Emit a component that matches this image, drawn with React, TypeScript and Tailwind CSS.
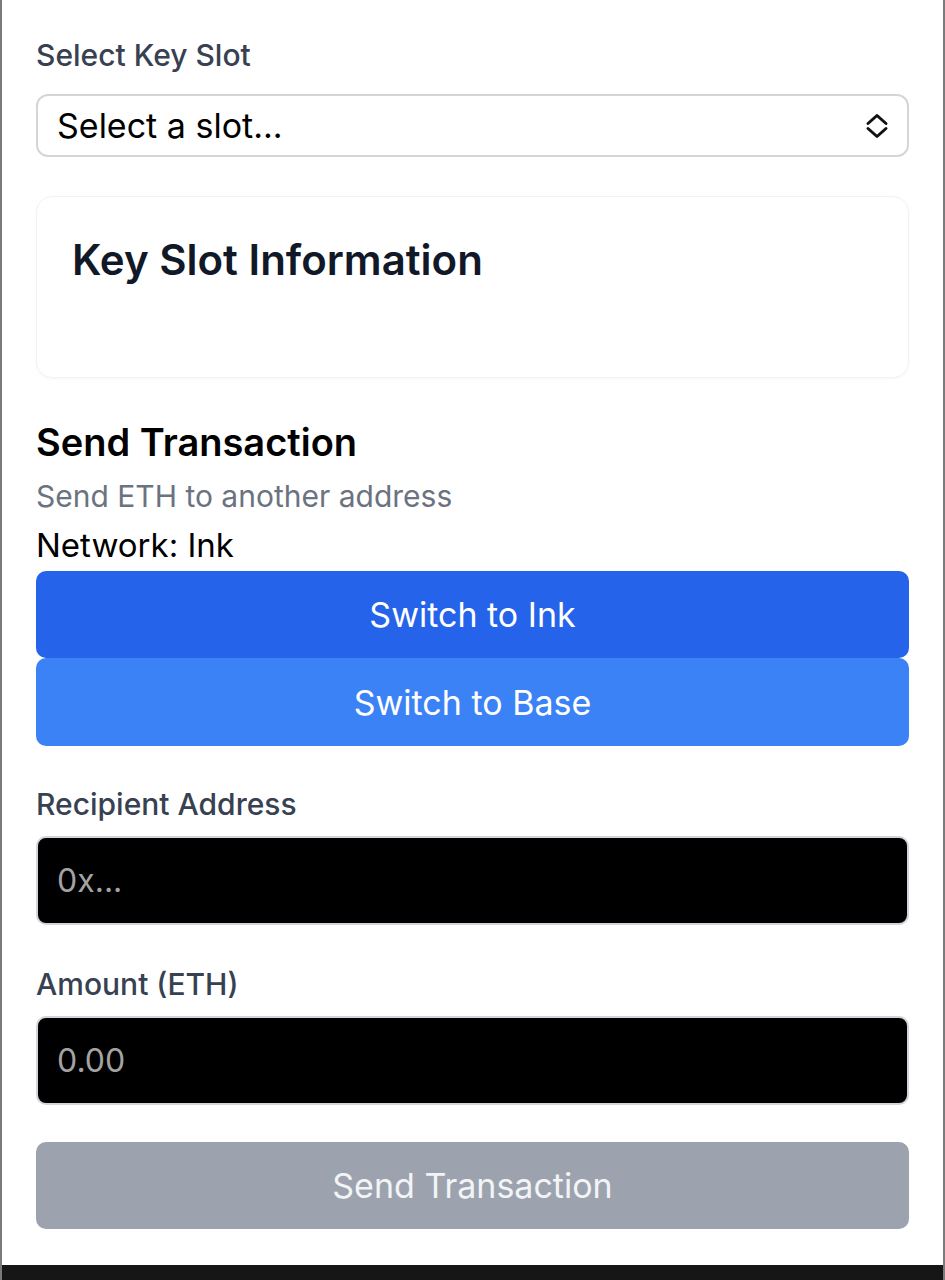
import { useState } from 'react';

// Small double-chevron used on the native-looking select
function UpDownIcon() {
  return (
    <svg width="24" height="26" viewBox="0 0 24 26" fill="none" stroke="#111" strokeWidth="3" strokeLinecap="round" strokeLinejoin="round">
      <path d="M3 10.5 L12 2.5 L21 10.5" />
      <path d="M3 15.5 L12 23.5 L21 15.5" />
    </svg>
  );
}

export default function App() {
  const [slot, setSlot] = useState('');
  const [recipient, setRecipient] = useState('');
  const [amount, setAmount] = useState('');

  return (
    <div
      className="w-[945px] h-[1280px] flex flex-col bg-white border-l-2 border-r-2 border-[#7a7a7a]"
      style={{ fontFamily: 'Inter, "Noto Sans", sans-serif' }}
    >
      <div className="flex-1 flex flex-col px-[34px] pt-[37px]">
        {/* Key slot picker */}
        <label className="text-[30px] leading-[36px] font-medium text-[#374151]">Select Key Slot</label>
        <div className="relative mt-[21px] h-[63px] rounded-[12px] border-2 border-[#d4d5d9] flex items-center pl-[19px] pr-[18px]">
          <span className="flex-1 text-[34px] text-black">{slot || 'Select a slot...'}</span>
          <UpDownIcon />
          <select
            className="absolute inset-0 opacity-0"
            value={slot}
            onChange={(e) => setSlot(e.target.value)}
          >
            <option value="">Select a slot...</option>
          </select>
        </div>

        {/* Key slot info card */}
        <div className="mt-[39px] h-[182px] rounded-[16px] border border-[#f1f2f4] shadow-[0_1px_3px_rgba(0,0,0,0.04)] px-[35px] pt-[37px]">
          <h2 className="text-[42px] leading-[52px] font-semibold text-[#111827]">Key Slot Information</h2>
        </div>

        {/* Send transaction */}
        <h2 className="mt-[42px] text-[38px] leading-[44px] font-semibold text-black">Send Transaction</h2>
        <p className="mt-[14px] text-[30px] leading-[36px] text-[#6b7280]">Send ETH to another address</p>
        <p className="mt-[12px] text-[33px] leading-[38px] text-black">Network: Ink</p>

        <button className="mt-[7px] h-[87px] rounded-[10px] bg-[#2563eb] text-white text-[34px]">Switch to Ink</button>
        <button className="h-[88px] rounded-[10px] bg-[#3b82f6] text-white text-[34px]">Switch to Base</button>

        <label className="mt-[40px] text-[30px] leading-[36px] font-medium text-[#374151]">Recipient Address</label>
        <input
          className="mt-[14px] h-[89px] rounded-[10px] border-2 border-[#d1d5db] bg-black px-[19px] text-[32px] text-white placeholder:text-[#a3a3a3] outline-none"
          placeholder="0x..."
          value={recipient}
          onChange={(e) => setRecipient(e.target.value)}
        />

        <label className="mt-[41px] text-[30px] leading-[36px] font-medium text-[#374151]">Amount (ETH)</label>
        <input
          className="mt-[14px] h-[89px] rounded-[10px] border-2 border-[#d1d5db] bg-black px-[19px] text-[32px] text-white placeholder:text-[#a3a3a3] outline-none"
          placeholder="0.00"
          value={amount}
          onChange={(e) => setAmount(e.target.value)}
        />

        <button
          className="mt-[37px] h-[87px] rounded-[10px] bg-[#9ca3af] text-[#f3f4f6] text-[34px]"
          disabled={!recipient || !amount}
        >
          Send Transaction
        </button>
      </div>
      <div className="h-[15px] bg-[#161616]" />
    </div>
  );
}
